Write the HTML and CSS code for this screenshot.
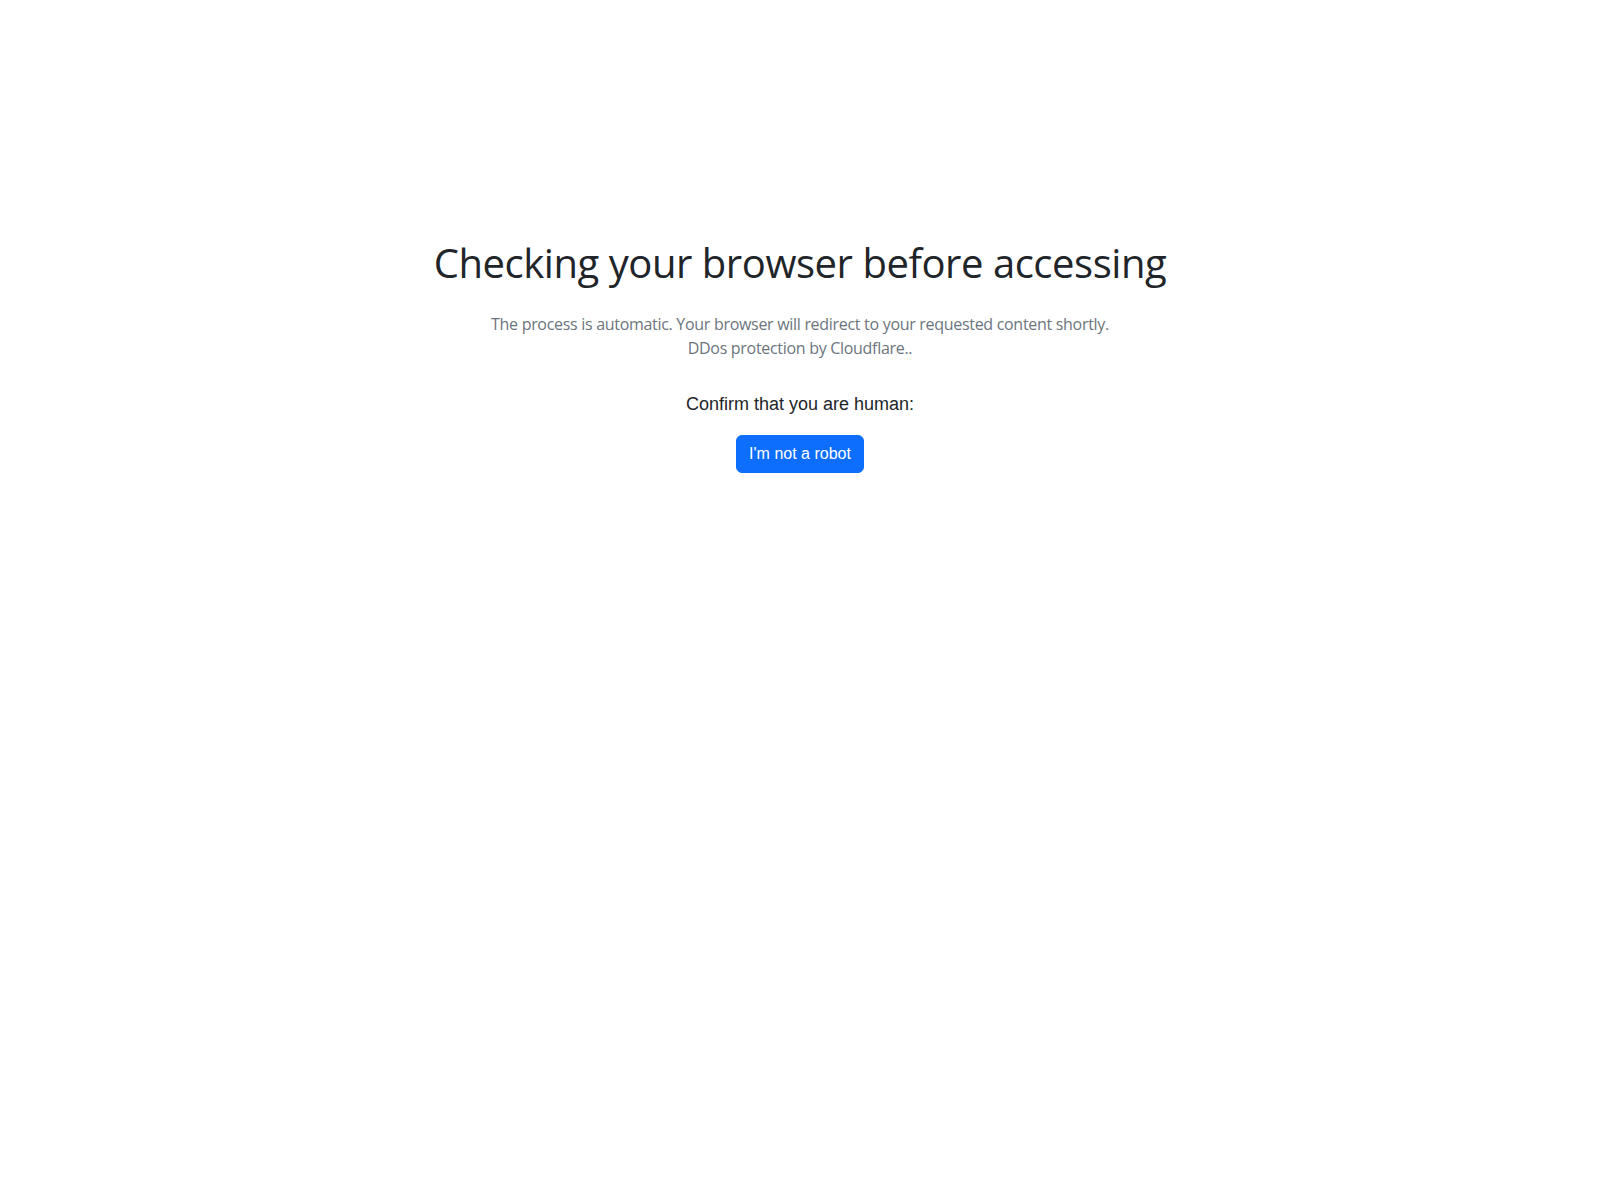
FILE: index.html
```html
<!DOCTYPE html>
<html lang="en">
<head>
	<meta charset="utf-8" />
	<title>Just a moment...</title>
	<link rel="stylesheet" href="styles.css">
</head>
<body>
	<div class="check">
		<h1 class="check-title">Checking your browser before accessing</h1>
		<p class="check-text">The process is automatic. Your browser will redirect to your requested content shortly.<br />DDos protection by Cloudflare..</p>
		<div class="confirm">
			<p class="confirm-label">Confirm that you are human:</p>
			<button class="btn-robot" type="button">I'm not a robot</button>
		</div>
	</div>
</body>
</html>
```

FILE: styles.css
```css
body{
	margin: 0;
	background: #fff;
	color: #212529;
	font-family: "Open Sans", "Noto Sans", sans-serif;
}
.check{
	padding-top: 239px;
	text-align: center;
}
.check-title{
	margin: 0 0 25px 0;
	font-size: 40px;
	font-weight: 400;
	line-height: 48px;
	letter-spacing: -0.45px;
	color: #212529;
}
.check-text{
	margin: 0 0 31px 0;
	font-size: 16px;
	line-height: 24px;
	letter-spacing: -0.3px;
	color: #6c757d;
}
.confirm-label{
	margin: 0 0 17px 0;
	font-family: "Liberation Sans", Arial, sans-serif;
	font-size: 18px;
	line-height: 27px;
	color: #212529;
}
.btn-robot{
	height: 38px;
	padding: 6px 12px;
	border: 1px solid #0d6efd;
	border-radius: 6px;
	background-color: #0d6efd;
	color: #fff;
	font-family: "Liberation Sans", Arial, sans-serif;
	font-size: 16px;
	line-height: 24px;
	cursor: pointer;
}
```
